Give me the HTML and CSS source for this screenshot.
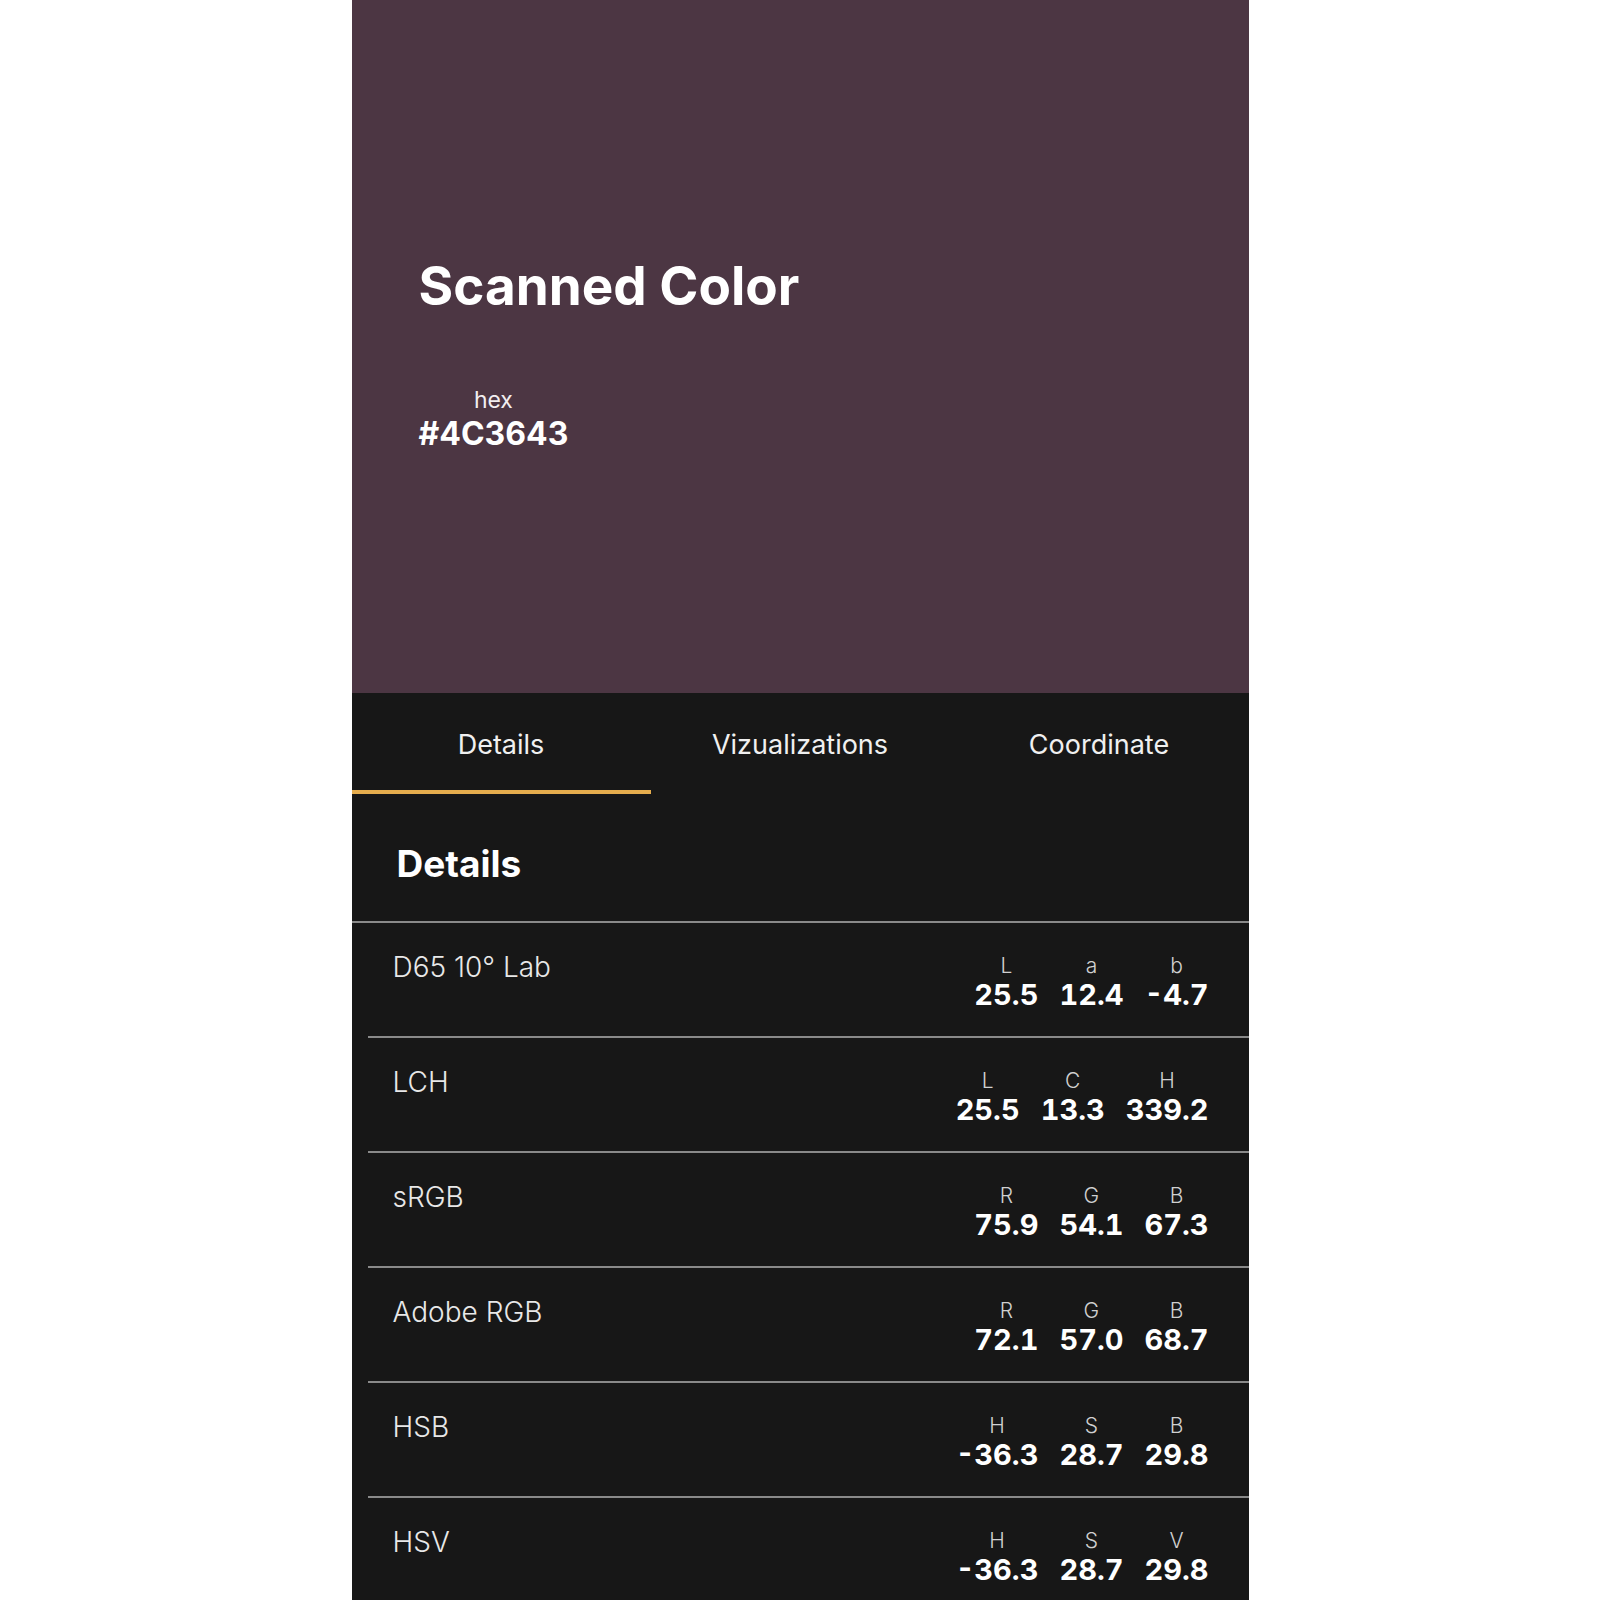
FILE: index.html
```html
<!DOCTYPE html>
<html>
<head>
    <title>Scanned Color</title>
    <meta charset="UTF-8">
    <link rel="stylesheet" href="styles.css">
</head>
<body>
    <div class="screen">
        <div class="swatch">
            <h1 class="swatch-title">Scanned Color</h1>
            <div class="hex-box">
                <span class="hex-label">hex</span>
                <span class="hex-value">#4C3643</span>
            </div>
        </div>

        <div class="tabs">
            <div class="tab active">Details</div>
            <div class="tab">Vizualizations</div>
            <div class="tab">Coordinate</div>
        </div>

        <div class="section-head">
            <h2>Details</h2>
        </div>

        <div class="row">
            <div class="row-name">D65 10° Lab</div>
            <div class="vals">
                <div class="val"><span class="val-key">L</span><span class="val-num">25.5</span></div>
                <div class="val"><span class="val-key">a</span><span class="val-num">12.4</span></div>
                <div class="val"><span class="val-key">b</span><span class="val-num">-4.7</span></div>
            </div>
        </div>
        <div class="row">
            <div class="row-name">LCH</div>
            <div class="vals">
                <div class="val"><span class="val-key">L</span><span class="val-num">25.5</span></div>
                <div class="val"><span class="val-key">C</span><span class="val-num">13.3</span></div>
                <div class="val"><span class="val-key">H</span><span class="val-num">339.2</span></div>
            </div>
        </div>
        <div class="row">
            <div class="row-name">sRGB</div>
            <div class="vals">
                <div class="val"><span class="val-key">R</span><span class="val-num">75.9</span></div>
                <div class="val"><span class="val-key">G</span><span class="val-num">54.1</span></div>
                <div class="val"><span class="val-key">B</span><span class="val-num">67.3</span></div>
            </div>
        </div>
        <div class="row">
            <div class="row-name">Adobe RGB</div>
            <div class="vals">
                <div class="val"><span class="val-key">R</span><span class="val-num">72.1</span></div>
                <div class="val"><span class="val-key">G</span><span class="val-num">57.0</span></div>
                <div class="val"><span class="val-key">B</span><span class="val-num">68.7</span></div>
            </div>
        </div>
        <div class="row">
            <div class="row-name">HSB</div>
            <div class="vals">
                <div class="val"><span class="val-key">H</span><span class="val-num">-36.3</span></div>
                <div class="val"><span class="val-key">S</span><span class="val-num">28.7</span></div>
                <div class="val"><span class="val-key">B</span><span class="val-num">29.8</span></div>
            </div>
        </div>
        <div class="row">
            <div class="row-name">HSV</div>
            <div class="vals">
                <div class="val"><span class="val-key">H</span><span class="val-num">-36.3</span></div>
                <div class="val"><span class="val-key">S</span><span class="val-num">28.7</span></div>
                <div class="val"><span class="val-key">V</span><span class="val-num">29.8</span></div>
            </div>
        </div>
    </div>
</body>
</html>
```

FILE: styles.css
```css
body {
    margin: 0;
    background-color: #fff;
    font-family: Inter, "Noto Sans", sans-serif;
}
.screen {
    width: 897px;
    margin: 0 auto;
    background-color: #171717;
    color: #fff;
    min-height: 1600px;
}
.swatch {
    height: 693px;
    box-sizing: border-box;
    padding: 254px 0 0 67px;
    background-color: #4c3643;
}
.swatch-title {
    margin: 0;
    font-size: 53px;
    line-height: 64px;
    font-weight: 700;
}
.hex-box {
    display: inline-flex;
    flex-direction: column;
    align-items: center;
    margin-top: 68px;
}
.hex-label {
    font-size: 23px;
    line-height: 28px;
    font-weight: 400;
    color: #f2eef0;
}
.hex-value {
    margin-top: 1px;
    font-size: 32px;
    line-height: 38px;
    font-weight: 700;
}
.tabs {
    display: flex;
}
.tab {
    flex: 1;
    text-align: center;
    padding: 35px 0 29px;
    font-size: 27px;
    line-height: 33px;
    color: #f0f0f0;
    border-bottom: 4px solid transparent;
}
.tab.active {
    border-bottom-color: #e6ad4d;
}
.section-head {
    padding: 47px 0 35px 45px;
    border-bottom: 2px solid #8a8a8a;
}
.section-head h2 {
    margin: 0;
    font-size: 37px;
    line-height: 45px;
    font-weight: 700;
}
.row {
    display: flex;
    justify-content: space-between;
    align-items: flex-start;
    height: 115px;
    box-sizing: border-box;
    margin-left: 16px;
    padding: 27px 40px 0 25px;
    border-bottom: 2px solid #8a8a8a;
}
.row-name {
    font-size: 28px;
    line-height: 34px;
    font-weight: 300;
    color: #e8e8e8;
}
.vals {
    display: flex;
    gap: 21px;
    margin-top: 4px;
}
.val {
    display: flex;
    flex-direction: column;
    align-items: center;
}
.val-key {
    font-size: 21px;
    line-height: 24px;
    font-weight: 300;
    color: #d0d0d0;
}
.val-num {
    margin-top: 1px;
    font-size: 29px;
    line-height: 32px;
    font-weight: 700;
    font-variant-numeric: tabular-nums;
}
```
